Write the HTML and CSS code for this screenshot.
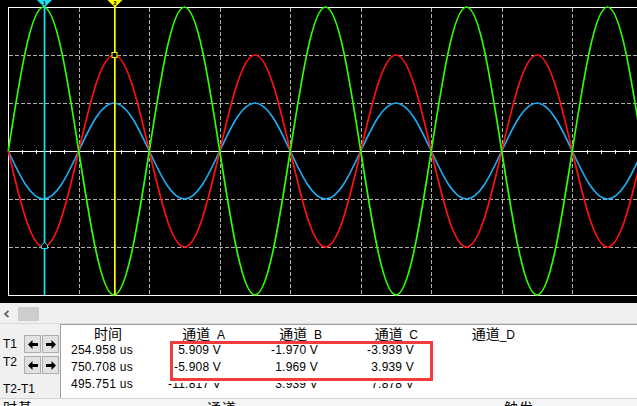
FILE: index.html
```html
<!DOCTYPE html>
<html lang="zh-CN">
<head>
<meta charset="utf-8">
<title>Oscilloscope</title>
<link rel="stylesheet" href="styles.css">
</head>
<body>
<div class="app">
  <div class="scope">
    <svg width="637" height="303" viewBox="0 0 637 303">
      <rect width="637" height="303" fill="#000"/>
      <g stroke="#b0b0b0" stroke-width="1" stroke-dasharray="4 2" fill="none">
        <line x1="79.5" y1="8" x2="79.5" y2="295"/>
        <line x1="149.5" y1="8" x2="149.5" y2="295"/>
        <line x1="220.5" y1="8" x2="220.5" y2="295"/>
        <line x1="290.5" y1="8" x2="290.5" y2="295"/>
        <line x1="361.5" y1="8" x2="361.5" y2="295"/>
        <line x1="431.5" y1="8" x2="431.5" y2="295"/>
        <line x1="502.5" y1="8" x2="502.5" y2="295"/>
        <line x1="572.5" y1="8" x2="572.5" y2="295"/>
        <line x1="9" y1="55.5" x2="637" y2="55.5"/>
        <line x1="9" y1="103.5" x2="637" y2="103.5"/>
        <line x1="9" y1="199.5" x2="637" y2="199.5"/>
        <line x1="9" y1="247.5" x2="637" y2="247.5"/>
      </g>
      <g stroke="#fff" stroke-width="1" fill="none" shape-rendering="crispEdges">
        <line x1="8" y1="7.5" x2="637" y2="7.5"/>
        <line x1="8.5" y1="7" x2="8.5" y2="296"/>
        <line x1="8" y1="295.5" x2="637" y2="295.5"/>
        <line x1="8" y1="151.5" x2="637" y2="151.5"/>
        <line x1="8" y1="152" x2="637" y2="152" stroke-width="4" stroke-dasharray="1 13.11"/>
      </g>
      <g fill="none" stroke-width="1.7">
        <path vector-effect="non-scaling-stroke" stroke="#1eaaf0" transform="translate(8.25 151) scale(35.25 48)" d="M0 0c.32613 .5123 .63809 1 1 1c.36191 0 .67387 -.4877 1 -1c.32613 -.5123 .63809 -1 1 -1c.36191 0 .67387 .4877 1 1c.32613 .5123 .63809 1 1 1c.36191 0 .67387 -.4877 1 -1c.32613 -.5123 .63809 -1 1 -1c.36191 0 .67387 .4877 1 1c.32613 .5123 .63809 1 1 1c.36191 0 .67387 -.4877 1 -1c.32613 -.5123 .63809 -1 1 -1c.36191 0 .67387 .4877 1 1c.32613 .5123 .63809 1 1 1c.36191 0 .67387 -.4877 1 -1c.32613 -.5123 .63809 -1 1 -1c.36191 0 .67387 .4877 1 1c.32613 .5123 .63809 1 1 1c.36191 0 .67387 -.4877 1 -1c.32613 -.5123 .63809 -1 1 -1c.36191 0 .67387 .4877 1 1"/>
        <path vector-effect="non-scaling-stroke" stroke="#ff1010" transform="translate(8.25 151) scale(35.25 96)" d="M0 0c.32613 .5123 .63809 1 1 1c.36191 0 .67387 -.4877 1 -1c.32613 -.5123 .63809 -1 1 -1c.36191 0 .67387 .4877 1 1c.32613 .5123 .63809 1 1 1c.36191 0 .67387 -.4877 1 -1c.32613 -.5123 .63809 -1 1 -1c.36191 0 .67387 .4877 1 1c.32613 .5123 .63809 1 1 1c.36191 0 .67387 -.4877 1 -1c.32613 -.5123 .63809 -1 1 -1c.36191 0 .67387 .4877 1 1c.32613 .5123 .63809 1 1 1c.36191 0 .67387 -.4877 1 -1c.32613 -.5123 .63809 -1 1 -1c.36191 0 .67387 .4877 1 1c.32613 .5123 .63809 1 1 1c.36191 0 .67387 -.4877 1 -1c.32613 -.5123 .63809 -1 1 -1c.36191 0 .67387 .4877 1 1"/>
        <path vector-effect="non-scaling-stroke" stroke="#2bff00" transform="translate(8.25 151) scale(35.25 -144)" d="M0 0c.32613 .5123 .63809 1 1 1c.36191 0 .67387 -.4877 1 -1c.32613 -.5123 .63809 -1 1 -1c.36191 0 .67387 .4877 1 1c.32613 .5123 .63809 1 1 1c.36191 0 .67387 -.4877 1 -1c.32613 -.5123 .63809 -1 1 -1c.36191 0 .67387 .4877 1 1c.32613 .5123 .63809 1 1 1c.36191 0 .67387 -.4877 1 -1c.32613 -.5123 .63809 -1 1 -1c.36191 0 .67387 .4877 1 1c.32613 .5123 .63809 1 1 1c.36191 0 .67387 -.4877 1 -1c.32613 -.5123 .63809 -1 1 -1c.36191 0 .67387 .4877 1 1c.32613 .5123 .63809 1 1 1c.36191 0 .67387 -.4877 1 -1c.32613 -.5123 .63809 -1 1 -1c.36191 0 .67387 .4877 1 1"/>
      </g>
      <rect x="43.7" y="0" width="1.7" height="295" fill="#19e3f3"/>
      <rect x="114" y="0" width="1.7" height="295" fill="#ffff00"/>
      <rect x="112" y="52.5" width="5" height="5" fill="#000" stroke="#ffff00" stroke-width="1"/>
      <path d="M41.5 248.5 V245 L44.5 242.5 L47.5 245 V248.5 Z" fill="#000" stroke="#19e3f3" stroke-width="1"/>
      <path d="M37 0 H52 L44.5 7.5 Z" fill="#19e3f3"/>
      <path d="M107.5 0 H122.5 L115 7.5 Z" fill="#ffff00"/>
      <text x="44.5" y="5.2" class="cnum">1</text>
      <text x="115" y="5.2" class="cnum">2</text>
    </svg>
  </div>

  <div class="hscroll">
    <svg class="sarrow" width="7" height="8" viewBox="0 0 7 8"><polyline points="5.5,0.8 2,4 5.5,7.2" fill="none" stroke="#606060" stroke-width="1.7"/></svg>
    <div class="thumb"></div>
  </div>

  <div class="panel">
    <div class="ctrl">
      <div class="lbl">T1</div>
      <button class="btn"><svg width="10" height="9" viewBox="0 0 10 9"><path d="M0 4.5 L4.5 0 V3 H10 V6 H4.5 V9 Z" fill="#000"/></svg></button>
      <button class="btn"><svg width="10" height="9" viewBox="0 0 10 9"><path d="M10 4.5 L5.5 0 V3 H0 V6 H5.5 V9 Z" fill="#000"/></svg></button>
      <div class="lbl lbl-top">T2</div>
      <button class="btn"><svg width="10" height="9" viewBox="0 0 10 9"><path d="M0 4.5 L4.5 0 V3 H10 V6 H4.5 V9 Z" fill="#000"/></svg></button>
      <button class="btn"><svg width="10" height="9" viewBox="0 0 10 9"><path d="M10 4.5 L5.5 0 V3 H0 V6 H5.5 V9 Z" fill="#000"/></svg></button>
      <div class="lbl lbl-diff">T2-T1</div>
    </div>
    <div class="table">
      <div class="hd hd-time">时间</div>
      <div class="hd">通道<span class="lat">_A</span></div>
      <div class="hd">通道<span class="lat">_B</span></div>
      <div class="hd">通道<span class="lat">_C</span></div>
      <div class="hd">通道<span class="lat">_D</span></div>
      <div></div>

      <div class="tv">254.958 us</div>
      <div class="v">5.909 V</div>
      <div class="v">-1.970 V</div>
      <div class="v">-3.939 V</div>
      <div class="v"></div>
      <div></div>

      <div class="tv">750.708 us</div>
      <div class="v">-5.908 V</div>
      <div class="v">1.969 V</div>
      <div class="v">3.939 V</div>
      <div class="v"></div>
      <div></div>

      <div class="tv">495.751 us</div>
      <div class="v">-11.817 V</div>
      <div class="v">3.939 V</div>
      <div class="v">7.878 V</div>
      <div class="v"></div>
      <div></div>
    </div>
  </div>

  <div class="tabs">
    <span>时基</span>
    <span>通道</span>
    <span>触发</span>
  </div>

  <div class="mark"></div>
</div>
</body>
</html>
```

FILE: styles.css
```css
* { box-sizing: border-box; }
html, body { margin: 0; padding: 0; background: #f0f0f0; }
body { width: 637px; height: 406px; overflow: hidden; }

.app {
  position: relative;
  width: 637px;
  height: 406px;
  overflow: hidden;
  font-family: "Liberation Sans", "Noto Sans CJK SC", sans-serif;
  font-size: 12px;
  color: #000;
}

.scope { height: 303px; background: #000; }
.scope svg { display: block; }
.cnum {
  font-family: "Liberation Sans", sans-serif;
  font-size: 6px;
  font-weight: bold;
  fill: #000;
  text-anchor: middle;
}

.hscroll {
  height: 21px;
  background: #f0f0f0;
  border-bottom: 1px solid #dadada;
  display: flex;
  align-items: flex-start;
}
.sarrow { display: block; margin: 7px 0 0 3px; }
.thumb {
  margin: 4px 0 0 8px;
  width: 21px;
  height: 14px;
  background: #cdcdcd;
}

.panel {
  display: flex;
  height: 74px;
}

.ctrl {
  width: 60px;
  flex: none;
  background: #f0f0f0;
  display: grid;
  grid-template-columns: 21px 17px 17px;
  grid-template-rows: 18px 18px auto;
  column-gap: 1px;
  row-gap: 3px;
  padding: 11px 0 0 2px;
  align-content: start;
}
.lbl {
  padding-left: 1px;
  line-height: 18px;
  font-size: 12px;
  white-space: nowrap;
}
.lbl-top { align-self: start; line-height: 12px; }
.lbl-diff {
  grid-column: 1 / span 3;
  line-height: 16px;
  margin-top: 4px;
}
.btn {
  margin: 0;
  padding: 0;
  width: 17px;
  height: 18px;
  background: #e1e1e1;
  border: 1px solid #adadad;
  display: flex;
  align-items: center;
  justify-content: center;
}
.btn svg { display: block; }

.table {
  flex: 1;
  background: #fff;
  border-left: 1px solid #a0a0a0;
  border-top: 1px solid #a0a0a0;
  display: grid;
  grid-template-columns: 68px 96px 97px 96px 97px 1fr;
  grid-template-rows: 17px 17px 17px 16px;
  align-content: start;
}
.hd {
  font-family: "Noto Sans CJK SC", sans-serif;
  font-size: 14px;
  line-height: 17px;
  text-align: right;
  white-space: nowrap;
}
.hd .lat {
  font-family: "Liberation Sans", sans-serif;
  font-size: 12px;
}
.hd-time { text-align: left; padding-left: 33px; }
.tv {
  padding-left: 10px;
  line-height: 17px;
  letter-spacing: 0.25px;
  white-space: nowrap;
}
.v {
  text-align: right;
  padding-right: 4px;
  line-height: 17px;
  letter-spacing: 0.2px;
  white-space: nowrap;
}

.tabs {
  border-top: 1px solid #d4d4d4;
  background: #f5f5f5;
  display: grid;
  grid-template-columns: 204px 297px 1fr;
  padding-left: 3px;
  font-family: "Noto Sans CJK SC", sans-serif;
  font-size: 14px;
  line-height: 16px;
  letter-spacing: 1px;
}

.mark {
  position: absolute;
  left: 170px;
  top: 341px;
  width: 263px;
  height: 40px;
  border: 3px solid #f53b3b;
  box-shadow: 0 2px 0 #fff;
}
```
